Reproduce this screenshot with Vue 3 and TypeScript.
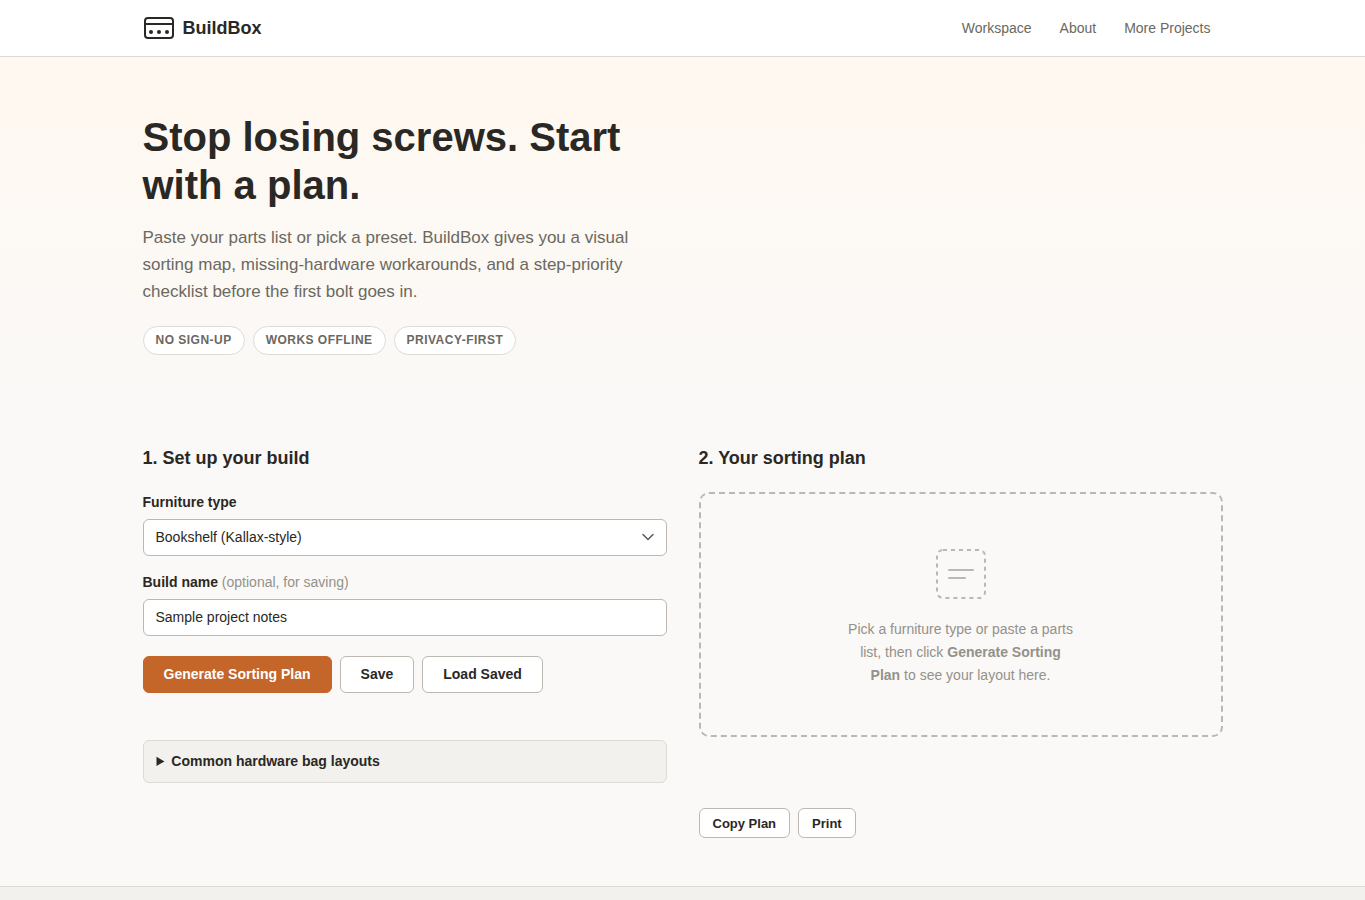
<script setup lang="ts">
import { ref } from 'vue'

const links: string[] = ['Workspace', 'About', 'More Projects']
const badges: string[] = ['No sign-up', 'Works offline', 'Privacy-first']
const furnitureTypes: string[] = [
  'Bookshelf (Kallax-style)',
  'Desk',
  'Dresser',
  'Bed frame',
]
const furniture = ref<string>(furnitureTypes[0])
const buildName = ref<string>('Sample project notes')
</script>

<template>
  <div class="page">
    <header class="site-header">
      <div class="container header-row">
        <a class="brand" href="#">
          <svg width="32" height="32" viewBox="0 0 32 32" fill="none" aria-hidden="true">
            <rect x="2" y="6" width="28" height="20" rx="3" stroke="currentColor" stroke-width="2" />
            <path d="M2 12h28" stroke="currentColor" stroke-width="2" />
            <circle cx="8" cy="20" r="2" fill="currentColor" />
            <circle cx="16" cy="20" r="2" fill="currentColor" />
            <circle cx="24" cy="20" r="2" fill="currentColor" />
          </svg>
          <span>BuildBox</span>
        </a>
        <nav class="nav">
          <a v-for="link in links" :key="link" href="#">{{ link }}</a>
        </nav>
      </div>
    </header>

    <section class="hero">
      <div class="container">
        <h1>Stop losing screws. Start with a plan.</h1>
        <p class="lead">
          Paste your parts list or pick a preset. BuildBox gives you a visual sorting map,
          missing-hardware workarounds, and a step-priority checklist before the first bolt goes in.
        </p>
        <ul class="badges">
          <li v-for="badge in badges" :key="badge">{{ badge }}</li>
        </ul>
      </div>
    </section>

    <main class="container workspace">
      <section>
        <h2>1. Set up your build</h2>
        <div class="field">
          <label for="furniture">Furniture type</label>
          <div class="select-wrap">
            <select id="furniture" v-model="furniture" class="control">
              <option v-for="type in furnitureTypes" :key="type">{{ type }}</option>
            </select>
            <svg class="chevron" width="12" height="8" viewBox="0 0 12 8" fill="none" aria-hidden="true">
              <path d="M1 1.5l5 5 5-5" stroke="currentColor" stroke-width="1.5" stroke-linecap="round" />
            </svg>
          </div>
        </div>
        <div class="field">
          <label for="build-name">Build name <span class="hint">(optional, for saving)</span></label>
          <input id="build-name" v-model="buildName" class="control" type="text" />
        </div>
        <div class="actions">
          <button type="button" class="btn primary">Generate Sorting Plan</button>
          <button type="button" class="btn">Save</button>
          <button type="button" class="btn">Load Saved</button>
        </div>
        <details class="layouts">
          <summary>Common hardware bag layouts</summary>
        </details>
      </section>

      <section>
        <h2>2. Your sorting plan</h2>
        <div class="empty">
          <svg width="64" height="64" viewBox="0 0 64 64" fill="none" stroke="currentColor" stroke-width="2" aria-hidden="true">
            <rect x="8" y="8" width="48" height="48" rx="6" stroke-dasharray="4 4" />
            <path d="M20 28h24M20 36h16" stroke-linecap="round" />
          </svg>
          <p>
            Pick a furniture type or paste a parts list, then click
            <strong>Generate Sorting Plan</strong> to see your layout here.
          </p>
        </div>
        <div class="plan-actions">
          <button type="button" class="btn small">Copy Plan</button>
          <button type="button" class="btn small">Print</button>
        </div>
      </section>
    </main>

    <section class="about"></section>
  </div>
</template>

<style>
body {
  margin: 0;
  background: #faf9f7;
}
</style>

<style scoped>
.page {
  display: flex;
  flex-direction: column;
  min-height: 100vh;
  color: #2a2824;
  font-family: "Liberation Sans", Arial, sans-serif;
  font-size: 14px;
  line-height: 21px;
}

.page * {
  box-sizing: border-box;
}

.container {
  width: 100%;
  max-width: 1120px;
  margin: 0 auto;
  padding: 0 20px;
}

.site-header {
  background: #fff;
  border-bottom: 1px solid #dddbd6;
}

.header-row {
  display: flex;
  align-items: center;
  justify-content: space-between;
  height: 56px;
}

.brand {
  display: flex;
  align-items: center;
  gap: 8px;
  color: inherit;
  font-size: 18px;
  font-weight: 700;
  text-decoration: none;
}

.nav {
  display: flex;
  gap: 4px;
}

.nav a {
  padding: 6px 12px;
  color: #6b6860;
  line-height: 22px;
  text-decoration: none;
}

.hero {
  padding: 56px 0 40px;
  background: linear-gradient(180deg, #fff8f0 0%, #faf9f7 100%);
}

h1 {
  max-width: 520px;
  margin: 0 0 15px;
  font-size: 40px;
  line-height: 48px;
}

.lead {
  max-width: 520px;
  margin: 0 0 21px;
  color: #6b6860;
  font-size: 17px;
  line-height: 27px;
}

.badges {
  display: flex;
  flex-wrap: wrap;
  gap: 8px;
  margin: 0;
  padding: 0;
  list-style: none;
}

.badges li {
  padding: 4px 12px;
  border: 1px solid #dddbd6;
  border-radius: 20px;
  background: #fff;
  color: #6b6860;
  font-size: 12px;
  font-weight: 700;
  letter-spacing: 0.04em;
  line-height: 19px;
  text-transform: uppercase;
}

.workspace {
  display: grid;
  grid-template-columns: repeat(2, minmax(0, 1fr));
  gap: 32px;
  padding-top: 48px;
  padding-bottom: 48px;
}

h2 {
  margin: 0 0 18px;
  font-size: 18px;
  line-height: 31px;
}

.field {
  margin-bottom: 16px;
}

label {
  display: block;
  margin-bottom: 6px;
  font-weight: 700;
}

.hint {
  color: #94918a;
  font-weight: 400;
}

.select-wrap {
  position: relative;
}

.control {
  display: block;
  width: 100%;
  height: 37px;
  padding: 0 12px 1px;
  border: 1px solid #bbb8b2;
  border-radius: 6px;
  background: #fff;
  color: inherit;
  font: inherit;
  appearance: none;
}

.chevron {
  position: absolute;
  top: 14px;
  right: 13px;
  color: #5c5952;
  pointer-events: none;
}

.actions {
  display: flex;
  flex-wrap: wrap;
  gap: 8px;
  margin-top: 20px;
}

.btn {
  height: 37px;
  padding: 0 20px 1px;
  border: 1px solid #bbb8b2;
  border-radius: 6px;
  background: #fff;
  color: inherit;
  font: inherit;
  font-weight: 700;
  cursor: pointer;
}

.btn.primary {
  border-color: #c4652a;
  background: #c4652a;
  color: #fff;
}

.btn.small {
  height: 30px;
  padding: 1px 13px 0;
  font-size: 13px;
}

.layouts {
  margin-top: 47px;
  padding: 10px 13px;
  border: 1px solid #dddbd6;
  border-radius: 6px;
  background: #f2f1ed;
}

.layouts summary {
  font-weight: 700;
  cursor: pointer;
}

.empty {
  display: flex;
  flex-direction: column;
  align-items: center;
  gap: 12px;
  padding: 48px 24px;
  border: 2px dashed #bbb8b2;
  border-radius: 10px;
  color: #94918a;
  text-align: center;
}

.empty svg {
  color: #bbb8b2;
}

.empty p {
  max-width: 232px;
  margin: 0;
  line-height: 23px;
}

.plan-actions {
  display: flex;
  gap: 8px;
  margin-top: 71px;
}

.about {
  flex: 1;
  border-top: 1px solid #dddbd6;
  background: #f2f1ed;
}
</style>
